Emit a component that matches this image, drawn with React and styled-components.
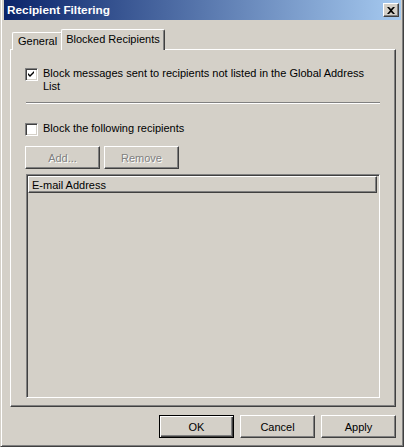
import React from "react";
import styled, { createGlobalStyle, css } from "styled-components";

const Global = createGlobalStyle`
  html, body { margin: 0; padding: 0; background: #d4d0c8; }
  body { font-family: "Liberation Sans", Arial, sans-serif; font-size: 11px; color: #000; }
  * { box-sizing: border-box; }
`;

const Window = styled.div`
  width: 404px;
  height: 447px;
  background: #d4d0c8;
  border-left: 1px solid #d4d0c8;
  border-right: 1px solid #404040;
  border-bottom: 1px solid #404040;
  box-shadow: inset 1px 0 0 #fff, inset -1px 0 0 #808080, inset 0 -1px 0 #808080;
  padding: 0 2px 2px 2px;
  display: flex;
  flex-direction: column;
`;

const TitleBar = styled.div`
  height: 20px;
  margin-left: 1px;
  background: linear-gradient(to right, #0a246a 0%, #a6caf0 100%);
  display: flex;
  align-items: center;
  padding: 0 3px 0 3px;
`;

const Title = styled.div`
  flex: 1;
  color: #fff;
  font-weight: bold;
  font-size: 11.8px;
`;

const CloseBtn = styled.div`
  width: 16px;
  height: 14px;
  background: #d4d0c8;
  border-top: 1px solid #fff;
  border-left: 1px solid #fff;
  border-right: 1px solid #404040;
  border-bottom: 1px solid #404040;
  box-shadow: inset -1px -1px 0 #808080;
  display: flex;
  align-items: center;
  justify-content: center;
  margin-right: -1px;
`;

const Body = styled.div`
  flex: 1;
  display: flex;
  flex-direction: column;
  padding: 9px 5px 0 7px;
`;

const TabStrip = styled.div`
  height: 21px;
  display: flex;
  align-items: flex-end;
  padding-left: 2px;
  position: relative;
  z-index: 1;
  margin-bottom: -1px;
`;

const Tab = styled.div`
  height: 18px;
  padding: 0 5px 1px 5px;
  display: flex;
  align-items: center;
  background: #d4d0c8;
  border-top: 1px solid #fff;
  border-left: 1px solid #fff;
  border-right: 1px solid #404040;
  box-shadow: inset -1px 0 0 #808080;
  border-radius: 2px 2px 0 0;
  ${(p) =>
    p.$active &&
    css`
      height: 21px;
      margin-left: -2px;
      padding: 0 4px 3px 4px;
    `}
`;

const Panel = styled.div`
  width: 386px;
  height: 358px;
  border-top: 1px solid #fff;
  border-left: 1px solid #fff;
  border-right: 1px solid #404040;
  border-bottom: 1px solid #404040;
  box-shadow: inset -1px -1px 0 #808080;
  padding: 17px 15px 0 15px;
  display: flex;
  flex-direction: column;
`;

const CheckRow = styled.div`
  display: flex;
  align-items: flex-start;
  gap: 4px;
  line-height: 13px;
  margin-top: ${(p) => p.$mt || 0}px;
`;

const Box = styled.div`
  width: 13px;
  height: 13px;
  flex: none;
  margin-top: 1px;
  margin-left: -1px;
  background: #fff;
  border-top: 1px solid #808080;
  border-left: 1px solid #808080;
  border-right: 1px solid #fff;
  border-bottom: 1px solid #fff;
  box-shadow: inset 1px 1px 0 #404040, inset -1px -1px 0 #d4d0c8;
  display: flex;
  align-items: center;
  justify-content: center;
`;

const Label = styled.div`
  width: 332px;
  padding-left: 1px;
`;

const Separator = styled.div`
  height: 2px;
  border-top: 1px solid #808080;
  border-bottom: 1px solid #fff;
  margin-top: 9px;
`;

const ButtonRow = styled.div`
  display: flex;
  gap: ${(p) => p.$gap}px;
  margin-top: ${(p) => p.$mt}px;
  margin-left: ${(p) => p.$ml || 0}px;
  justify-content: ${(p) => (p.$right ? "flex-end" : "flex-start")};
`;

const Button = styled.div`
  width: 75px;
  height: 23px;
  display: flex;
  align-items: center;
  justify-content: center;
  background: #d4d0c8;
  border-top: 1px solid #fff;
  border-left: 1px solid #fff;
  border-right: 1px solid #404040;
  border-bottom: 1px solid #404040;
  box-shadow: inset -1px -1px 0 #808080;
  color: ${(p) => (p.$disabled ? "#808080" : "#000")};
  text-shadow: ${(p) => (p.$disabled ? "1px 1px 0 #fff" : "none")};
  ${(p) =>
    p.$default &&
    css`
      border: 1px solid #000;
      box-shadow: inset 1px 1px 0 #fff, inset -1px -1px 0 #404040,
        inset -2px -2px 0 #808080;
    `}
`;

const ListBox = styled.div`
  margin-top: 5px;
  width: 354px;
  height: 224px;
  border-top: 1px solid #808080;
  border-left: 1px solid #808080;
  border-right: 1px solid #fff;
  border-bottom: 1px solid #fff;
  box-shadow: inset 1px 1px 0 #404040, inset -1px -1px 0 #d4d0c8;
  padding: 1px 2px 1px 1px;
  background: #d4d0c8;
`;

const ListHeader = styled.div`
  height: 17px;
  display: flex;
  align-items: center;
  padding-left: 3px;
  border-top: 1px solid #fff;
  border-left: 1px solid #fff;
  border-right: 1px solid #404040;
  border-bottom: 1px solid #404040;
  box-shadow: inset -1px -1px 0 #808080;
`;

const Check = () => (
  <svg width="7" height="7" viewBox="0 0 7 7">
    <path d="M0 2 L2 4 L6 0 L6 2 L2 6 L0 4 Z" fill="#000" />
  </svg>
);

const CloseIcon = () => (
  <svg width="8" height="7" viewBox="0 0 8 7">
    <path d="M0 0h2l2 2 2-2h2L5 3.5 8 7H6L4 5 2 7H0l3-3.5z" fill="#000" />
  </svg>
);

export default function App() {
  return (
    <>
      <Global />
      <Window>
        <TitleBar>
          <Title>Recipient Filtering</Title>
          <CloseBtn>
            <CloseIcon />
          </CloseBtn>
        </TitleBar>
        <Body>
          <TabStrip>
            <Tab>General</Tab>
            <Tab $active>Blocked Recipients</Tab>
          </TabStrip>
          <Panel>
            <CheckRow>
              <Box>
                <Check />
              </Box>
              <Label>
                Block messages sent to recipients not listed in the Global
                Address List
              </Label>
            </CheckRow>
            <Separator />
            <CheckRow $mt={18}>
              <Box />
              <Label>Block the following recipients</Label>
            </CheckRow>
            <ButtonRow $gap={4} $mt={10} $ml={-1}>
              <Button $disabled>Add...</Button>
              <Button $disabled>Remove</Button>
            </ButtonRow>
            <ListBox>
              <ListHeader>E-mail Address</ListHeader>
            </ListBox>
          </Panel>
          <ButtonRow $gap={6} $mt={8} $right>
            <Button $default>OK</Button>
            <Button>Cancel</Button>
            <Button>Apply</Button>
          </ButtonRow>
        </Body>
      </Window>
    </>
  );
}
